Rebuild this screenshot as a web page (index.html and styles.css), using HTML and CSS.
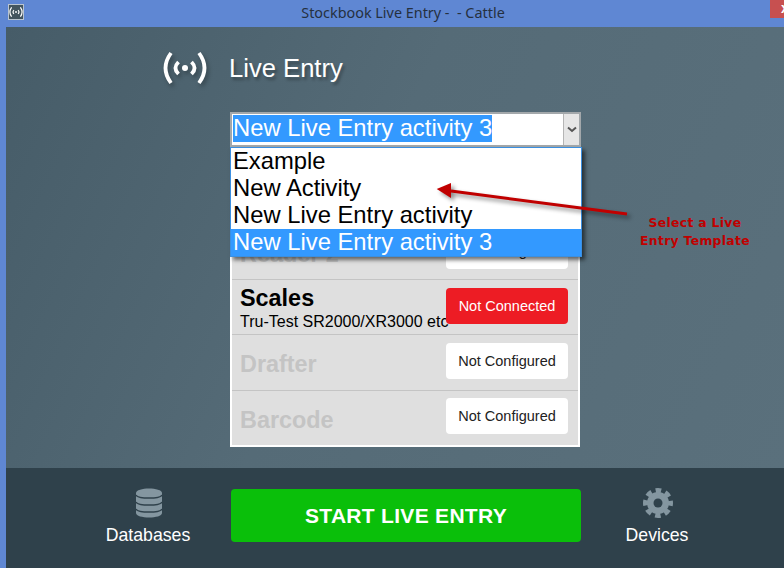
FILE: index.html
```html
<!DOCTYPE html>
<html lang="en">
<head>
<meta charset="UTF-8">
<meta name="viewport" content="width=device-width, initial-scale=1.0">
<title>Stockbook Live Entry</title>
<link rel="stylesheet" href="styles.css">
</head>
<body>
    <div class="titlebar">
        <div class="app-icon">
            <svg width="14" height="10" viewBox="0 0 44 32">
                <path class="wave" d="M8 1Q-3 16 8 31M36 1Q47 16 36 31M15.5 10Q9.5 16 15.5 22M28.5 10Q34.5 16 28.5 22"/>
                <circle class="wave-dot" cx="22" cy="16" r="3"/>
            </svg>
        </div>
        <div class="window-title">Stockbook Live Entry -  - Cattle</div>
        <div class="close-btn">x</div>
    </div>

    <div class="app">
        <div class="main">
            <div class="header">
                <svg class="header-icon" width="44" height="32" viewBox="0 0 44 32">
                    <path class="wave" d="M8 1Q-3 16 8 31M36 1Q47 16 36 31M15.5 10Q9.5 16 15.5 22M28.5 10Q34.5 16 28.5 22"/>
                    <circle class="wave-dot" cx="22" cy="16" r="3"/>
                </svg>
                <div class="header-title">Live Entry</div>
            </div>

            <div class="template-select">
                <div class="select-value"><span>New Live Entry activity 3</span></div>
                <div class="select-arrow">
                    <svg width="10" height="7" viewBox="0 0 10 7"><path d="M1 1.5L5 5L9 1.5"/></svg>
                </div>
                <div class="select-list">
                    <div class="select-option">Example</div>
                    <div class="select-option">New Activity</div>
                    <div class="select-option">New Live Entry activity</div>
                    <div class="select-option selected">New Live Entry activity 3</div>
                </div>
            </div>

            <div class="device-panel">
                <div class="device-row">
                    <div class="device-name off">Reader 1</div>
                    <div class="status-btn">Not Configured</div>
                </div>
                <div class="device-row">
                    <div class="device-name off">Reader 2</div>
                    <div class="status-btn">Not Configured</div>
                </div>
                <div class="device-row">
                    <div class="device-info">
                        <div class="device-name">Scales</div>
                        <div class="device-sub">Tru-Test SR2000/XR3000 etc</div>
                    </div>
                    <div class="status-btn error">Not Connected</div>
                </div>
                <div class="device-row drafter">
                    <div class="device-name off">Drafter</div>
                    <div class="status-btn">Not Configured</div>
                </div>
                <div class="device-row barcode">
                    <div class="device-name off">Barcode</div>
                    <div class="status-btn">Not Configured</div>
                </div>
            </div>

            <!-- annotation drawn on top of the screenshot -->
            <svg class="callout-arrow" width="200" height="40" viewBox="0 0 200 40">
                <path d="M193 32L17 9" stroke="#c00000" stroke-width="3"/>
                <path d="M2.7 7L17 1L17 16Z" fill="#c00000"/>
            </svg>
            <div class="callout-text">Select a Live<br>Entry Template</div>
        </div>

        <div class="footer">
            <div class="nav-item databases">
                <svg width="26" height="30" viewBox="0 0 26 30">
                    <path class="nav-shape" d="M0 5C0 -1 26 -1 26 5V25C26 31 0 31 0 25Z"/>
                    <path class="db-line" d="M0 7C2 11 24 11 26 7M0 14C2 18 24 18 26 14M0 21C2 25 24 25 26 21"/>
                </svg>
                <div class="nav-label">Databases</div>
            </div>
            <div class="start-btn">START LIVE ENTRY</div>
            <div class="nav-item devices">
                <svg width="30" height="30" viewBox="0 0 30 30">
                    <circle class="nav-shape" cx="15" cy="15" r="11"/>
                    <circle class="gear-teeth" cx="15" cy="15" r="12.5"/>
                    <circle class="gear-hole" cx="15" cy="15" r="4.5"/>
                </svg>
                <div class="nav-label">Devices</div>
            </div>
        </div>
    </div>
</body>
</html>
```

FILE: styles.css
```css
/* Basic page setup */
*{
    margin: 0;
    padding: 0;
    box-sizing: border-box;
    font-family: 'Liberation Sans', Arial, sans-serif;
}
html, body{
    height: 100%;
    overflow: hidden;
}
body{
    display: flex;
    flex-direction: column;
    background-color: #5f87d3;
}

/* Window title bar */
.titlebar{
    display: flex;
    height: 27px;
    flex-shrink: 0;
}
.app-icon{
    display: flex;
    align-items: center;
    justify-content: center;
    width: 16px;
    height: 16px;
    margin: 4px 0 0 8px;
    background-color: #43555f;
    border: 1px solid #b9c4d0;
}
.window-title{
    flex: 1;
    padding-left: 12px;
    font-family: 'Noto Sans', sans-serif;
    font-size: 14.4px;
    line-height: 26px;
    text-align: center;
    white-space: pre;
    color: #25303f;
}
.close-btn{
    width: 14px;
    height: 18px;
    padding-left: 11px;
    overflow: hidden;
    background-color: #c75050;
    color: #fff;
    font-size: 14px;
    font-weight: 700;
    line-height: 16px;
}

/* Window body */
.app{
    flex: 1;
    display: flex;
    flex-direction: column;
    margin-left: 6px;
    min-height: 0;
}
.main{
    position: relative;
    flex: 1;
    padding-left: 224px;
    background: linear-gradient(115deg, #465c68 0%, #556b77 45%, #5a707c 100%);
}
.header{
    display: flex;
    align-items: center;
    height: 82px;
    margin: 0 0 3px -67px;
}
.header-icon{
    overflow: visible;
    filter: drop-shadow(2px 3px 2px rgba(0,0,0,0.3));
}
.header-title{
    margin-left: 22px;
    font-size: 25.6px;
    color: #fff;
    text-shadow: 2px 3px 3px rgba(0,0,0,0.3);
}
.wave{
    fill: none;
    stroke: #fff;
    stroke-width: 3.8;
}
.wave-dot{
    fill: #fff;
}

/* Template drop down */
.template-select{
    position: relative;
    display: flex;
    width: 351px;
    height: 35px;
    background-color: #fff;
    border: 2px solid #a3a8ab;
}
.select-value{
    flex: 1;
    padding: 1px 0 0 1px;
    font-size: 23.8px;
    line-height: 25px;
    color: #fff;
}
.select-value span{
    display: inline-block;
    padding-bottom: 2px;
    background-color: #3399ff;
}
.select-arrow{
    display: flex;
    align-items: center;
    justify-content: center;
    width: 16px;
    background-color: #e6e6e6;
    border-left: 1px solid #b5b5b5;
}
.select-arrow path{
    fill: none;
    stroke: #555;
    stroke-width: 2;
}
.select-list{
    position: absolute;
    top: 33px;
    left: -2px;
    z-index: 2;
    width: 352px;
    background-color: #fff;
    border: 1px solid #3b8fe0;
    box-shadow: 3px 3px 4px rgba(0,0,0,0.55);
}
.select-option{
    height: 27px;
    padding-left: 2px;
    font-size: 23.8px;
    line-height: 25px;
    color: #000;
}
.select-option.selected{
    background-color: #3399ff;
    color: #fff;
}

/* Device list */
.device-panel{
    width: 350px;
    margin-top: 21px;
    background-color: #dfdfdf;
    border: 2px solid #fff;
}
.device-row{
    display: flex;
    align-items: center;
    justify-content: space-between;
    height: 55px;
    padding: 0 10px 3px 8px;
    border-bottom: 1px solid #c4c4c4;
}
.device-row.drafter{
    height: 56px;
    padding-bottom: 4px;
}
.device-row.barcode{
    height: 54px;
    padding-bottom: 4px;
    border-bottom: none;
}
.device-row.barcode .device-name{
    margin-top: 8px;
}
.device-info{
    min-width: 0;
    margin-top: 5px;
    white-space: nowrap;
}
.device-name{
    font-size: 23.4px;
    font-weight: 700;
    line-height: 24px;
    color: #000;
}
.device-name.off{
    margin-top: 6px;
    color: #c4c4c4;
}
.device-sub{
    margin-top: 3px;
    font-size: 16px;
    line-height: 18px;
    color: #000;
}
.status-btn{
    flex-shrink: 0;
    width: 122px;
    height: 36px;
    background-color: #fff;
    border-radius: 4px;
    font-size: 14.5px;
    line-height: 36px;
    text-align: center;
    color: #222;
}
.status-btn.error{
    background-color: #ed1c24;
    color: #fff;
}

/* Annotation */
.callout-arrow{
    position: absolute;
    top: 155px;
    left: 428px;
    z-index: 3;
    overflow: visible;
    filter: drop-shadow(3px 3px 2px rgba(0,0,0,0.45));
}
.callout-text{
    position: absolute;
    top: 187px;
    left: 624px;
    width: 130px;
    font-family: 'DejaVu Sans', sans-serif;
    font-size: 12.4px;
    font-weight: 700;
    letter-spacing: 0.3px;
    line-height: 18px;
    text-align: center;
    color: #c00000;
}

/* Bottom bar */
.footer{
    display: flex;
    align-items: flex-start;
    height: 100px;
    flex-shrink: 0;
    background-color: #2f414b;
}
.nav-item{
    display: flex;
    flex-direction: column;
    align-items: center;
    width: 100px;
    padding-top: 20px;
}
.nav-item svg{
    margin-left: 2px;
}
.databases{
    margin: 0 33px 0 92px;
}
.devices{
    margin-left: 26px;
}
.nav-label{
    margin-top: 7px;
    font-size: 17.7px;
    line-height: 20px;
    color: #fff;
}
.nav-shape{
    fill: #8496a0;
}
.db-line{
    fill: none;
    stroke: #2f414b;
    stroke-width: 1.4;
}
.gear-teeth{
    fill: none;
    stroke: #8496a0;
    stroke-width: 5;
    stroke-dasharray: 5.5 4.32;
    stroke-dashoffset: 2.75;
}
.gear-hole{
    fill: #2f414b;
}
.start-btn{
    width: 350px;
    height: 53px;
    margin-top: 21px;
    background-color: #0abf0a;
    border-radius: 4px;
    font-size: 21px;
    font-weight: 700;
    letter-spacing: 0.3px;
    line-height: 53px;
    text-align: center;
    color: #fff;
}
```
